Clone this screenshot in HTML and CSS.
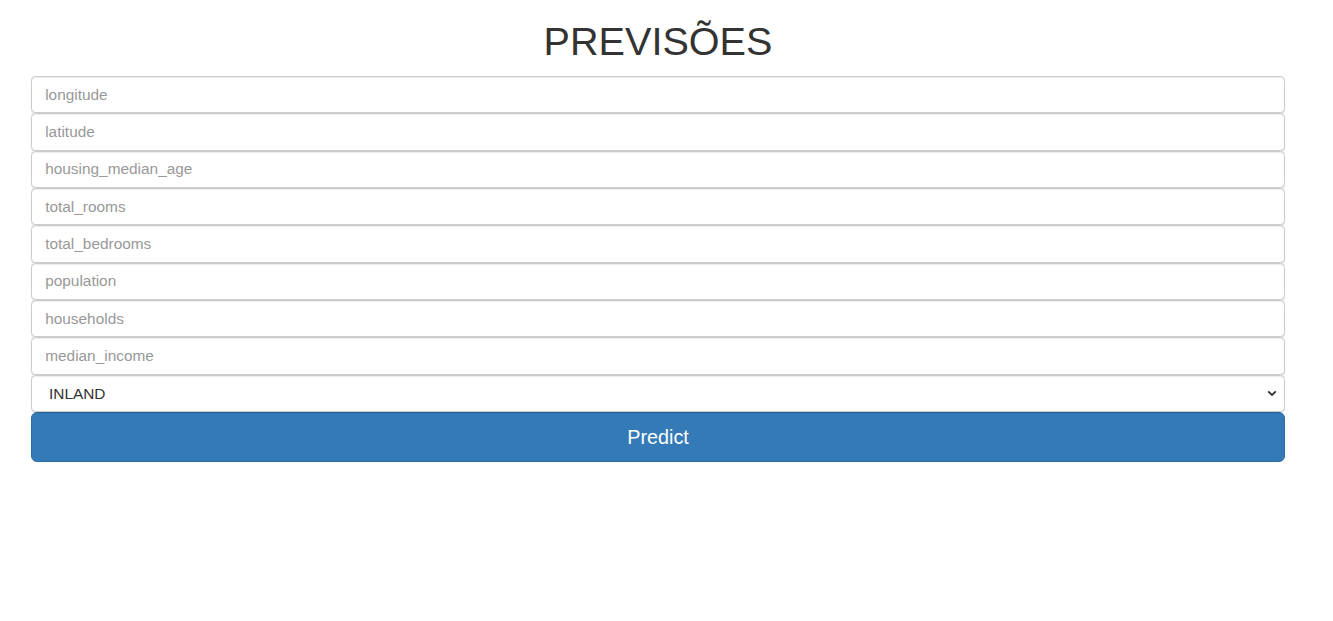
FILE: index.html
```html
<!DOCTYPE html>
<html lang="pt">
<head>
<meta charset="utf-8">
<title>Previsões</title>
<link rel="stylesheet" href="styles.css">
</head>
<body>
<div class="container">
  <h1 class="title">PREVISÕES</h1>
  <form class="form">
    <input class="field" type="text" placeholder="longitude">
    <input class="field" type="text" placeholder="latitude">
    <input class="field" type="text" placeholder="housing_median_age">
    <input class="field" type="text" placeholder="total_rooms">
    <input class="field" type="text" placeholder="total_bedrooms">
    <input class="field" type="text" placeholder="population">
    <input class="field" type="text" placeholder="households">
    <input class="field" type="text" placeholder="median_income">
    <div class="select-wrap">
      <select class="field select">
        <option>INLAND</option>
        <option>&lt;1H OCEAN</option>
        <option>NEAR OCEAN</option>
        <option>NEAR BAY</option>
        <option>ISLAND</option>
      </select>
      <svg class="chevron" width="10" height="7" viewBox="0 0 10 7"><path d="M1.2 1.3 L5 5 L8.8 1.3" fill="none" stroke="#333" stroke-width="1.8"/></svg>
    </div>
    <button class="btn" type="button">Predict</button>
  </form>
</div>
</body>
</html>
```
FILE: styles.css
```css
html, body {
  margin: 0;
  padding: 0;
  background: #fff;
}
body {
  font-family: "Liberation Sans", Arial, Helvetica, sans-serif;
  color: #333;
}
.container {
  padding: 0 48px 0 31px;
}
.title {
  margin: 19.5px 0 13px;
  font-size: 39.6px;
  line-height: 1.1;
  font-weight: 400;
  text-align: center;
  color: #333;
}
.form {
  display: flex;
  flex-direction: column;
  margin: 0;
}
.field {
  display: block;
  box-sizing: border-box;
  width: 100%;
  height: 37.33px;
  margin: 0;
  padding: 6.6px 13.2px;
  font-family: "Liberation Sans", Arial, Helvetica, sans-serif;
  font-size: 15.4px;
  color: #555;
  background: #fff;
  border: 1px solid #ccc;
  border-radius: 4.4px;
  box-shadow: inset 0 1px 1px rgba(0,0,0,0.075), 0 1px 1px rgba(0,0,0,0.12);
  outline: none;
}
.field::placeholder {
  color: #999;
  opacity: 1;
}
.select-wrap {
  position: relative;
}
.select {
  appearance: none;
  -webkit-appearance: none;
  padding-left: 17px;
  color: #333;
}
.chevron {
  position: absolute;
  right: 8px;
  top: 15px;
  pointer-events: none;
}
.btn {
  display: block;
  box-sizing: border-box;
  width: 100%;
  height: 50px;
  margin: 0;
  padding: 0;
  font-family: "Liberation Sans", Arial, Helvetica, sans-serif;
  font-size: 19.8px;
  color: #fff;
  background: #337ab7;
  border: 1px solid #2e6da4;
  border-radius: 6px;
  cursor: pointer;
}
```
